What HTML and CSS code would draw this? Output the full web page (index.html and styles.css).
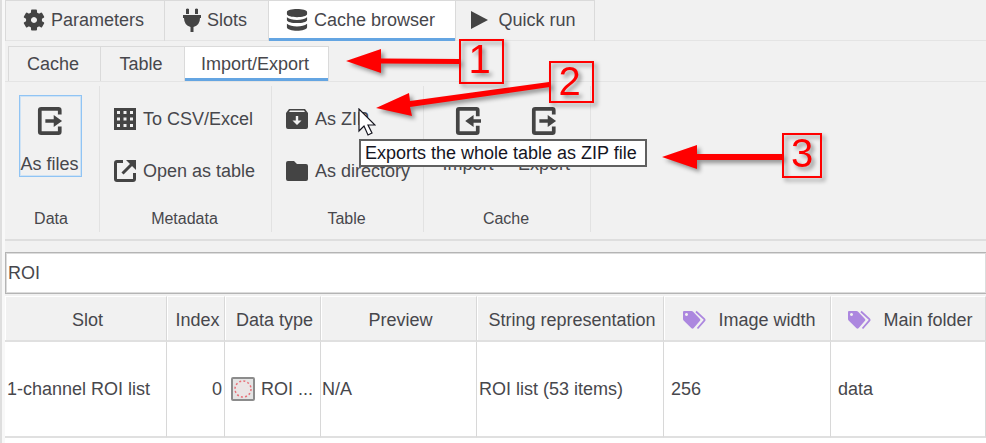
FILE: index.html
```
<!DOCTYPE html>
<html lang="en">
<head>
<meta charset="utf-8">
<title>Cache browser</title>
<link rel="stylesheet" href="styles.css">
</head>
<body>
<svg class="defs" aria-hidden="true">
  <symbol id="i-export" viewBox="0 0 28 32">
    <path d="M24.500 9V4.500Q24.500 3 23 3H4.500Q3 3 3 4.500V27.500Q3 29 4.500 29H23Q24.500 29 24.500 27.500V22" fill="none" stroke="currentColor" stroke-width="4"/>
    <path d="M9 14h9V9.500l9 6.500-9 6.500V18H9z" fill="currentColor"/>
  </symbol>
  <symbol id="i-import" viewBox="0 0 28 32">
    <path d="M24.500 11V4.500Q24.500 3 23 3H4.500Q3 3 3 4.500V27.500Q3 29 4.500 29H23Q24.500 29 24.500 27.500V21" fill="none" stroke="currentColor" stroke-width="4"/>
    <path d="M28 14h-8V9.500L11 16l9 6.500V18h8z" fill="currentColor"/>
  </symbol>
  <symbol id="i-tags" viewBox="0 0 24 20">
    <path fill-rule="evenodd" fill="currentColor" d="M1 2q0-1 1-1h7.500q.8 0 1.400.6L18 9q.9.900 0 1.800L11.500 18.200q-1 .9-2 0L1.600 10.500Q1 9.900 1 9zM4.500 3a1.500 1.500 0 1 0 .01 0z"/>
    <path d="M14 1.500l8.300 7.700q.7.700 0 1.400L15.500 18.500" fill="none" stroke="currentColor" stroke-width="1.800"/>
  </symbol>
</svg>

<main class="app">
  <nav class="tabs" aria-label="Views">
    <button class="tab tab-parameters"><svg class="icon" viewBox="0 0 22 22"><g fill="currentColor"><path fill-rule="evenodd" d="M11 3a8 8 0 1 0 .01 0zM11 8a3 3 0 1 1-.01 0z"/><g id="tooth"><rect x="8" y=".5" width="6" height="5" rx="1"/><rect x="8" y="16.500" width="6" height="5" rx="1"/></g><use href="#tooth" transform="rotate(60 11 11)"/><use href="#tooth" transform="rotate(120 11 11)"/></g></svg>Parameters</button>
    <button class="tab tab-slots"><svg class="icon icon-plug" viewBox="0 0 18 24"><path fill="currentColor" d="M3 1q1.500-1 3 0v5H3zM12 1q1.500-1 3 0v5h-3zM0 7h18v3h-1q0 7-6.500 9V24h-3v-5Q1 17 1 10H0z"/></svg>Slots</button>
    <button class="tab tab-browser active"><svg class="icon" viewBox="0 0 22 24"><path fill="currentColor" d="M0 3.500C0-1 22-1 22 3.500v2C22 10 0 10 0 5.500zM0 9q4 3 11 3t11-3v3c0 4.500-22 4.500-22 0zM0 16q4 3 11 3t11-3v4c0 5-22 5-22 0z"/></svg>Cache browser</button>
    <button class="tab tab-run"><svg class="icon icon-play" viewBox="0 0 17 18"><path d="M0 0l17 9-17 9z" fill="currentColor"/></svg>Quick run</button>
  </nav>

  <nav class="tabs subtabs" aria-label="Tools">
    <button class="tab tab-cache">Cache</button>
    <button class="tab tab-table">Table</button>
    <button class="tab tab-transfer active">Import/Export</button>
  </nav>

  <div class="ribbon">
    <section class="group group-data">
      <div class="tools"><button class="big selected"><svg viewBox="0 0 28 32"><use href="#i-export"/></svg>As files</button></div>
      <h2>Data</h2>
    </section>
    <section class="group group-metadata">
      <div class="tools stack">
        <button class="small"><svg class="icon" viewBox="0 0 22 22"><path fill="currentColor" fill-rule="evenodd" d="M0 0h22v22H0zM3 3v3h3V3zM9.500 3v3h3V3zM16 3v3h3V3zM3 9.500v3h3v-3zM9.500 9.500v3h3v-3zM16 9.500v3h3v-3zM3 16v3h3v-3zM9.500 16v3h3v-3zM16 16v3h3v-3z"/></svg>To CSV/Excel</button>
        <button class="small"><svg class="icon" viewBox="0 0 22 22"><path d="M9 1.500H3Q1.500 1.500 1.500 3v16Q1.500 20.500 3 20.500h16q1.500 0 1.500-1.500v-6M8.500 13.500L18 4" fill="none" stroke="currentColor" stroke-width="3"/><path d="M12 0h10v10z" fill="currentColor"/></svg>Open as table</button>
      </div>
      <h2>Metadata</h2>
    </section>
    <section class="group group-table">
      <div class="tools stack">
        <button class="small"><svg class="icon" viewBox="0 0 22 22"><path fill="currentColor" fill-rule="evenodd" d="M3 1h16l3 4v14q0 2-2 2H2q-2 0-2-2V5zM4 2.500L3 4h16l-1-1.500zM9.800 8v4.500H6.500L11 17l4.500-4.500h-3.300V8z"/></svg>As ZIP</button>
        <button class="small"><svg class="icon" viewBox="0 0 22 22"><path fill="currentColor" d="M0 3q0-2 2-2h6l3 3h9q2 0 2 2v13q0 2-2 2H2q-2 0-2-2z"/></svg>As directory</button>
      </div>
      <h2>Table</h2>
    </section>
    <section class="group group-cache">
      <div class="tools">
        <button class="big"><svg viewBox="0 0 28 32"><use href="#i-import"/></svg>Import</button>
        <button class="big"><svg viewBox="0 0 28 32"><use href="#i-export"/></svg>Export</button>
      </div>
      <h2>Cache</h2>
    </section>
  </div>

  <input class="search" type="text" value="ROI" aria-label="Search">

  <div class="results-pane">
  <table class="results">
    <colgroup><col class="c-slot"><col class="c-index"><col class="c-type"><col class="c-preview"><col class="c-string"><col class="c-width"><col class="c-folder"></colgroup>
    <thead><tr>
      <th>Slot</th><th>Index</th><th>Data type</th><th>Preview</th><th>String representation</th>
      <th><span class="tagged"><svg viewBox="0 0 24 20"><use href="#i-tags"/></svg>Image width</span></th>
      <th><span class="tagged"><svg viewBox="0 0 24 20"><use href="#i-tags"/></svg>Main folder</span></th>
    </tr></thead>
    <tbody><tr>
      <td>1-channel ROI list</td><td class="num">0</td>
      <td><span class="type"><svg viewBox="0 0 24 24"><rect x="1" y="1" width="22" height="22" rx="1" fill="#e4e4e4" stroke="#8c8c8c" stroke-width="2"/><circle cx="12" cy="12" r="8" fill="#ebe5e5" stroke="#e87078" stroke-width="1.500" stroke-dasharray="2 2.200"/></svg>ROI ...</span></td>
      <td>N/A</td><td>ROI list (53 items)</td><td class="wide">256</td><td class="wide">data</td>
    </tr></tbody>
  </table>
  </div>
</main>

<div class="tooltip" role="tooltip">Exports the whole table as ZIP file</div>
<svg class="arrows" viewBox="0 0 480 140" aria-hidden="true">
  <path d="M6 21l35-12v9.500l78 .5v5l-78-.5V33zM36 68l33-15 1 8 139-19 1 5-140 20 2 9zM322 117l35-12v9h85v6h-85v9z"/>
</svg>
<div class="callout one">1</div>
<div class="callout two">2</div>
<div class="callout three">3</div>
<svg class="cursor" viewBox="0 0 18 28" aria-hidden="true"><path d="M1 1v22l5-5 4 9 4-2-4-8h7z" fill="#fff" stroke="#15151f" stroke-width="1.200"/></svg>
</body>
</html>
```
FILE: styles.css
```
* { box-sizing: border-box; }

body {
  margin: 0;
  min-height: 100vh;
  background: #fff;
  color: #47474c;
  font: 18px/22px "Liberation Sans", Arial, sans-serif;
  overflow: hidden;
}

button {
  font: inherit;
  color: inherit;
  background: none;
  border: 0;
  padding: 0;
}

svg { display: block; flex: none; color: #444; }
.defs { position: absolute; width: 0; height: 0; }

.app {
  display: flex;
  flex-direction: column;
  min-height: 100vh;
  border-left: 2px solid #dedede;
  padding-left: 3px;
  background: linear-gradient(to right, #f8f8f8 3px, #f1f1f1 3px);
}

/* Tabs */
.tabs {
  display: flex;
  height: 41px;
  border-bottom: 1px solid #e4e4e4;
}
.tab {
  display: flex;
  align-items: center;
  justify-content: center;
  gap: 6px;
  height: 41px;
  padding: 0 3px 2px 0;
  border: 1px solid #dadada;
  border-left-width: 0;
  border-bottom: 0;
}
.tab:first-child { border-left-width: 1px; }
.tab.active {
  background: #fff;
  box-shadow: inset 0 -3px #64a5e2;
}
.icon { width: 22px; height: 22px; }
.icon-plug { width: 18px; height: 24px; }
.icon-play { width: 17px; height: 18px; margin-right: 4px; }
.tab-parameters { width: 160px; }
.tab-slots { width: 104px; }
.tab-browser { width: 187px; }
.tab-run { width: 139px; }

.subtabs {
  height: 41px;
  padding: 5px 0 0 3px;
}
.subtabs .tab { height: 35px; padding-bottom: 0; }
.tab-cache { width: 93px; }
.tab-table { width: 84px; }
.tab-transfer { width: 144px; }

/* Ribbon */
.ribbon {
  display: flex;
  padding: 4px 0 7px;
  border-bottom: 2px solid #dedede;
}
.group {
  display: flex;
  flex-direction: column;
  height: 146px;
  border-right: 1px solid #e2e2e2;
}
.group-data { width: 95px; }
.group-metadata { width: 172px; }
.group-table { width: 152px; }
.group-cache { width: 167px; }
.group h2 {
  margin: 0 2px 0 0;
  font-size: 16px;
  font-weight: normal;
  line-height: 22px;
  text-align: center;
}
.tools {
  display: flex;
  gap: 14px;
  height: 122px;
  padding: 9px 14px;
}
.group-cache .tools { padding-left: 14px; }
.big {
  display: flex;
  flex-direction: column;
  align-items: center;
  justify-content: space-between;
  width: 63px;
  height: 82px;
  padding: 10px 2px 1px 0;
  border: 1px solid transparent;
  white-space: nowrap;
}
.big svg { width: 26px; height: 30px; }
.big.selected {
  border-color: #90c4f4;
  box-shadow: inset 0 0 0 1px #cfe3f5;
}
.stack {
  flex-direction: column;
  gap: 30px;
  padding-top: 22px;
}
.small {
  display: flex;
  align-items: center;
  gap: 7px;
  height: 22px;
  white-space: nowrap;
}

/* Search and results */
.search {
  display: block;
  width: 100%;
  height: 42px;
  margin-top: 11px;
  padding: 0 2px;
  border: 1px solid #b4b4b4;
  box-shadow: inset 0 0 0 1px #dcdcdc;
  border-right: 0;
  background: #fff;
  color: inherit;
  font: inherit;
  outline: 0;
}
.results-pane {
  flex: 1;
  margin-top: 2px;
  background: #fff;
}
.results {
  width: 100%;
  table-layout: fixed;
  border-collapse: separate;
  border-spacing: 0;
}
.c-slot { width: 162px; }
.c-index { width: 58px; }
.c-type { width: 96px; }
.c-preview { width: 156px; }
.c-string { width: 187px; }
.c-width { width: 167px; }
th, td {
  padding: 0 2px;
  border-right: 1px solid #d8d8d8;
  border-bottom: 2px solid #e0e0e0;
  white-space: nowrap;
  text-align: left;
}
th {
  height: 46px;
  padding: 2px 0 0 4px;
  background: #f1f1f1;
  border-top: 1px solid #fff;
  box-shadow: inset 1px 0 #fff;
  font-weight: normal;
  text-align: center;
}
td { height: 96px; }
.num { text-align: right; }
td:nth-child(4) { padding-left: 1px; }
td.wide { padding-left: 7px; }
.tagged, .type { display: flex; align-items: center; }
.tagged { justify-content: center; gap: 12px; }
.tagged svg { width: 24px; height: 20px; color: #ac87df; }
.type { gap: 6px; padding-left: 4px; }
.type svg { width: 24px; height: 24px; }

/* Overlays */
.tooltip {
  position: absolute;
  left: 359px;
  top: 139px;
  padding: 1px 8px 1px 4px;
  border: 2px solid #606060;
  background: #fff;
  color: #15151f;
  white-space: nowrap;
}
.cursor {
  position: absolute;
  left: 358px;
  top: 108px;
  width: 18px;
  height: 28px;
}
.arrows {
  position: absolute;
  left: 340px;
  top: 40px;
  width: 480px;
  height: 140px;
  fill: #f00;
  filter: drop-shadow(3px 3px 2px rgba(0, 0, 0, .4));
}
.callout {
  position: absolute;
  width: 45px;
  height: 45px;
  padding-right: 4px;
  border: 2px solid #f00;
  color: #f00;
  font-size: 40px;
  line-height: 36px;
  text-align: center;
  filter: drop-shadow(3px 3px 2px rgba(0, 0, 0, .4));
}
.one { left: 459px; top: 39px; }
.two { left: 549px; top: 61px; height: 42px; }
.three { left: 782px; top: 133px; width: 40px; padding-right: 0; }
```
